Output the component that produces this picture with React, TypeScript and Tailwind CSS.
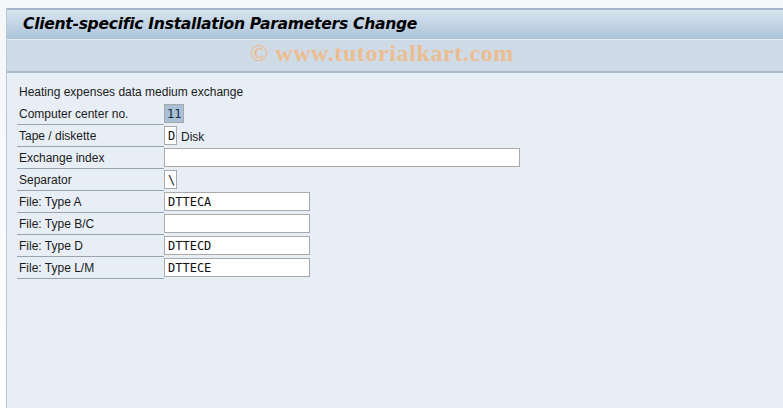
const rows = [
  { label: "Computer center no.", value: "11", width: "w-[20px]", selected: true },
  { label: "Tape / diskette", value: "D", width: "w-[13px]", note: "Disk" },
  { label: "Exchange index", value: "", width: "w-[356px]" },
  { label: "Separator", value: "\\", width: "w-[13px]" },
  { label: "File: Type A", value: "DTTECA", width: "w-[146px]" },
  { label: "File: Type B/C", value: "", width: "w-[146px]" },
  { label: "File: Type D", value: "DTTECD", width: "w-[146px]" },
  { label: "File: Type L/M", value: "DTTECE", width: "w-[146px]" },
];

export default function App() {
  return (
    <div className="h-[408px] w-[783px] overflow-hidden bg-gradient-to-b from-[#f4f6f9] to-white pt-[8px] pl-[6px] font-['Liberation_Sans',Arial,sans-serif]">
      <div className="flex h-full flex-col border-l border-[#b9c8d6]">
        {/* Title bar */}
        <div className="flex h-[31px] items-center border-t-2 border-[#a3b6c9] bg-gradient-to-b from-[#d8e4ef] to-[#acc3d9] pl-[16px]">
          <h1 className="text-[15.6px] font-bold italic text-black font-['DejaVu_Sans',Verdana,sans-serif] tracking-[-0.3px]">
            Client-specific Installation Parameters Change
          </h1>
        </div>

        {/* Watermark band */}
        <div className="flex h-[34px] items-center justify-center border-t border-[#e4ecf4] border-b-2 border-b-[#a9bacb] bg-[#cedbe6] pr-[26px] pb-[5px]">
          <span className="text-[24px] font-bold leading-none tracking-[0.6px] text-[#ecbd91] font-['Liberation_Serif',serif]">
            © www.tutorialkart.com
          </span>
        </div>

        {/* Content */}
        <div className="flex-1 bg-[#e8eef5] pl-[10px] pt-[8px] text-[12px] text-[#1a1a1a]">
          <div className="flex h-[22px] items-center pl-[2px]">
            Heating expenses data medium exchange
          </div>

          {rows.map((row) => (
            <div key={row.label} className="flex h-[22px]">
              <div className="flex w-[147px] items-center border-b border-[#97a3b0] pl-[2px]">
                {row.label}
              </div>
              <div className="flex items-start pt-[1px]">
                <div
                  className={
                    row.selected
                      ? `${row.width} flex h-[19px] items-center border border-[#a9a9a9] bg-[#a9bfd8] pl-[2px] font-['DejaVu_Sans_Mono',monospace] text-[12px] text-[#1a2a3a]`
                      : `${row.width} flex h-[19px] items-center border border-[#a9a9a9] bg-white pl-[3px] font-['DejaVu_Sans_Mono',monospace] text-[12px] text-[#111]`
                  }
                >
                  {row.value}
                </div>
                {row.note && <span className="ml-[4px] mt-[2px]">{row.note}</span>}
              </div>
            </div>
          ))}
        </div>
      </div>
    </div>
  );
}
